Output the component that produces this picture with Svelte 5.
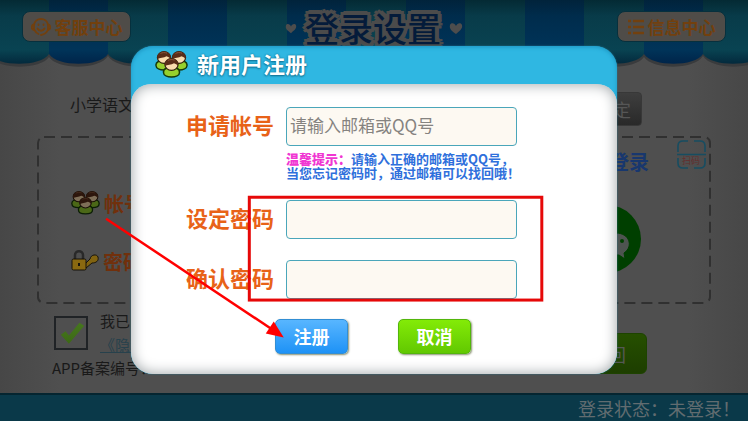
<script>
  let account = $state('');
  let password = $state('');
  let confirm = $state('');
  let agreed = $state(true);
</script>

{#snippet people()}
  <svg class="people" viewBox="0 0 33 27" aria-hidden="true">
    {#each [[9, 6.5], [24, 6.5], [16.5, 13.5]] as [x, y]}
      <g transform="translate({x} {y})">
        <path d="M-8 8C-8.500 4-4 3 0 3s8.500 1 8 5c0 6-16 6-16 0z" fill="#96d02e" stroke="#173b0a" stroke-width="1.5" />
        <ellipse cx="0" cy="0" rx="6.6" ry="5.8" fill="#fbdcae" stroke="#33200f" stroke-width="1.2" />
        <path d="M-6.6 1.5C-8-8.500 8-8.500 6.600 1.500 5.500 0 4-.8 2.500-1.200 0 .5-4.500 0-6.600 1.500z" fill="#5a2c18" />
        <path d="M-3.5-4C-2-5 1-5.3 3-4.3" fill="none" stroke="#8a5338" />
      </g>
    {/each}
  </svg>
{/snippet}

<div class="page">
  <header>
    <svg class="awning" width="100%" height="68" aria-hidden="true">
      <defs>
        <linearGradient id="teal" x1="0" y1="0" x2="0" y2="1">
          <stop offset="0" stop-color="#042a34" />
          <stop offset=".25" stop-color="#083b49" />
          <stop offset=".78" stop-color="#094352" />
          <stop offset="1" stop-color="#03293c" />
        </linearGradient>
        <linearGradient id="blue" x1="0" y1="0" x2="0" y2="1">
          <stop offset="0" stop-color="#01233b" />
          <stop offset=".25" stop-color="#002c4c" />
          <stop offset=".78" stop-color="#003459" />
          <stop offset="1" stop-color="#002449" />
        </linearGradient>
        <pattern id="stripes" width="119" height="68" x="-11" patternUnits="userSpaceOnUse">
          <path d="M0 56C8 70 52 70 60 57 68 70 111 70 119 56V0H0z" fill="#393b3d" />
          <path d="M0 0h60v54C52 67 8 67 0 54z" fill="url(#teal)" />
          <path d="M60 0h59v54C111 67 68 67 60 54z" fill="url(#blue)" />
        </pattern>
      </defs>
      <rect width="100%" height="68" fill="url(#stripes)" />
    </svg>
    <button class="nav">
      <svg width="20" height="20" viewBox="0 0 20 20" fill="none" stroke="#72400e" stroke-width="1.8" stroke-linecap="round" aria-hidden="true">
        <path d="M3 8c1-8 13-8 14 0M17 12.5c-1 3-4 5-7 5.5M3.5 13c1 2 2.5 3.5 4 4" />
        <path d="M3 7.5C0 8 0 12.5 3 13zM17 7.5c3 .5 3 5 0 5.500z" />
        <path d="M6.5 11.5c1.5 3 5.5 3 7 0M7.500 7.500v.5M12.500 7.500v.5" />
      </svg>
      客服中心
    </button>
    <div class="brand">
      <svg width="12" height="11" viewBox="0 0 14 13" aria-hidden="true"><path d="M7 12C3 9 0 7 1 3c1-3 5-2 6 1 1-3 5-4 6-1 1 4-3 6-6 9z" fill="#4d4d4d" /></svg>
      <h1>登录设置</h1>
      <svg width="14" height="13" viewBox="0 0 14 13" aria-hidden="true"><path d="M7 12C3 9 0 7 1 3c1-3 5-2 6 1 1-3 5-4 6-1 1 4-3 6-6 9z" fill="#4d4d4d" /></svg>
    </div>
    <button class="nav">
      <svg width="16" height="16" viewBox="0 0 16 16" stroke="#72400e" stroke-width="2.4" aria-hidden="true">
        <path d="M0 2h3M5 2h11M0 8h3M5 8h11M0 14h3M5 14h11" />
      </svg>
      信息中心
    </button>
  </header>

  <main>
    <div class="subject">
      <span>小学语文</span>
      <button class="ok">确定</button>
    </div>

    <section class="login">
      <svg class="dashes" width="100%" height="100%" aria-hidden="true">
        <rect class="dash" x="0" y="0" width="100%" height="100%" rx="6" />
      </svg>
      <div class="fields">
        <div class="field">{@render people()}<span>帐号</span></div>
        <div class="field">
          <svg width="28" height="22" viewBox="0 0 28 22" stroke="#17130a" aria-hidden="true">
            <path d="M4 10V5c0-5 8-5 8 0v5" fill="none" stroke="#292929" stroke-width="2.5" />
            <path d="M13 15l6-6c1-5 7-5 8-2 1 4-2 6-6 6l-6 5z" fill="#816310" />
            <rect x="1" y="9" width="14" height="11" rx="1.5" fill="#8a6910" />
            <path d="M8 13v3" stroke-width="2" />
          </svg>
          <span>密码</span>
        </div>
      </div>
      <div class="wechat">
        <h2>登录</h2>
        <svg width="68" height="68" viewBox="0 0 68 68" aria-hidden="true">
          <circle cx="34" cy="34" r="34" fill="#003f00" />
          <path d="M27 17c-12 0-18 14-9 21l-2 6 7-4c18 5 25-23 4-23z" fill="#4e5450" />
          <path d="M43 28c-17 0-19 22-2 22l5 0 6 4-1-6c10-7 5-20-8-20z" fill="#4e5450" stroke="#003f00" />
          <circle cx="38" cy="36" r="2" fill="#003f00" />
          <circle cx="49" cy="36" r="2" fill="#003f00" />
        </svg>
      </div>
      <div class="scan">
        <svg width="29" height="29" viewBox="0 0 29 29" fill="none" stroke="#174d61" stroke-width="1.6" aria-hidden="true">
          <path d="M1 12V6q0-5 5-5h5M17 1h6q5 0 5 5v6M1 18v5q0 5 5 5h5M17 28h6q5 0 5-5v-5M0 14.5h29" />
        </svg>
        <span>扫码</span>
      </div>
    </section>

    <div class="bottom">
      <label class="agree">
        <input type="checkbox" bind:checked={agreed} />
        <span>我已阅读<br /><a href="#privacy">《隐私》</a></span>
      </label>
      <button class="back">返回</button>
    </div>
    <p class="record">APP备案编号：</p>
  </main>

  <footer>登录状态：未登录！</footer>

  <div class="overlay">
    <div class="dialog" role="dialog" aria-labelledby="dialog-title">
      <div class="dialog-head">
        {@render people()}
        <h2 id="dialog-title">新用户注册</h2>
      </div>
      <form onsubmit={(e) => e.preventDefault()}>
        <div class="row">
          <label for="account">申请帐号</label>
          <input id="account" type="text" placeholder="请输入邮箱或QQ号" bind:value={account} />
        </div>
        <p class="hint">
          <strong>温馨提示：</strong>请输入正确的邮箱或QQ号，<br />当您忘记密码时，通过邮箱可以找回哦！
        </p>
        <div class="row">
          <label for="password">设定密码</label>
          <input id="password" type="password" bind:value={password} />
        </div>
        <div class="row">
          <label for="confirm">确认密码</label>
          <input id="confirm" type="password" bind:value={confirm} />
        </div>
        <div class="actions">
          <button class="register" type="submit">注册</button>
          <button class="cancel" type="button">取消</button>
        </div>
      </form>
      <svg class="guide" viewBox="0 0 487 328" aria-hidden="true">
        <rect x="118.5" y="151.5" width="293" height="103" fill="none" stroke="#e60808" stroke-width="3" />
        <path d="M-25 173L143 285" stroke="#f00" stroke-width="2.5" />
        <path d="M153 292l-18-4 8-12z" fill="#f00" />
      </svg>
    </div>
  </div>
</div>

<style>
  :global(body) {
    margin: 0;
    background: #4f4f4f;
  }

  .page {
    position: relative;
    display: flex;
    flex-direction: column;
    min-height: 100vh;
    overflow: hidden;
    background: linear-gradient(90deg, #474747, #4f4f4f 8%, #4f4f4f 92%, #474747);
    color: #191919;
    font-family: "Noto Sans CJK SC", sans-serif;
  }

  h1,
  h2,
  p {
    margin: 0;
  }

  button,
  input {
    box-sizing: border-box;
    font-family: inherit;
  }

  button {
    padding: 0;
    cursor: pointer;
  }

  header {
    position: relative;
    display: flex;
    justify-content: space-between;
    align-items: flex-start;
    box-sizing: border-box;
    height: 68px;
    padding: 11px 22px 0;
  }

  .awning {
    position: absolute;
    top: 0;
    left: 0;
  }

  .nav {
    position: relative;
    display: flex;
    align-items: center;
    justify-content: center;
    gap: 4px;
    width: 109px;
    height: 31px;
    border: 1px solid #07303d;
    border-radius: 8px;
    background: #4f4c48;
    color: #72400e;
    font-size: 17px;
    font-weight: 700;
    line-height: 24px;
  }

  .nav svg {
    flex-shrink: 0;
  }

  .brand {
    position: relative;
    display: flex;
    align-items: center;
    gap: 8px;
    height: 34px;
  }

  h1 {
    color: #041b3a;
    font-size: 34px;
    font-weight: 500;
    line-height: 34px;
    text-shadow:
      4px 0 #4b4b4b, -4px 0 #4b4b4b, 0 4px #4b4b4b, 0 -4px #4b4b4b,
      3px 3px #4b4b4b, -3px 3px #4b4b4b, 3px -3px #4b4b4b, -3px -3px #4b4b4b,
      2px 1px #4b4b4b, -2px -1px #4b4b4b, 1px -2px #4b4b4b, -1px 2px #4b4b4b;
  }

  main {
    flex: 1;
    padding: 24px 38px 0;
  }

  .subject {
    display: flex;
    justify-content: space-between;
    align-items: flex-start;
    padding: 0 68px 0 32px;
    font-size: 16px;
    line-height: 24px;
  }

  .ok {
    width: 66px;
    height: 34px;
    padding-right: 10px;
    border: 1px solid #383838;
    border-radius: 4px;
    background: linear-gradient(#3e3e3e, #292929);
    color: #565656;
    font-size: 18px;
    line-height: 24px;
    text-align: right;
  }

  .login {
    position: relative;
    display: flex;
    justify-content: space-between;
    box-sizing: border-box;
    height: 166px;
    margin-top: 11px;
    padding: 12px 61px 0 33px;
  }

  .dashes {
    position: absolute;
    inset: 0;
    overflow: visible;
  }

  .dash {
    fill: none;
    stroke: #303030;
    stroke-width: 2;
    stroke-dasharray: 11 6;
  }

  .fields {
    display: flex;
    flex-direction: column;
    gap: 34px;
    padding-top: 42px;
  }

  .field {
    display: flex;
    align-items: center;
    gap: 4px;
    height: 24px;
    color: #71300c;
    font-size: 20px;
    font-weight: 700;
  }

  .field .people {
    width: 29px;
    filter: brightness(0.5);
  }

  .people {
    width: 33px;
    flex-shrink: 0;
  }

  .wechat {
    display: flex;
    flex-direction: column;
    align-items: center;
    gap: 30px;
  }

  .wechat h2 {
    padding-left: 40px;
    color: #18376e;
    font-size: 20px;
    line-height: 26px;
  }

  .wechat svg {
    margin-right: 4px;
  }

  .scan {
    position: absolute;
    top: 3px;
    right: 4px;
    width: 29px;
    height: 29px;
  }

  .scan span {
    position: absolute;
    top: 15px;
    left: 5px;
    color: #642d2d;
    font-size: 9px;
    line-height: 12px;
    white-space: nowrap;
  }

  .bottom {
    display: flex;
    justify-content: space-between;
    padding: 6px 63px 0 16px;
  }

  .agree {
    display: flex;
    gap: 12px;
    font-size: 15px;
    line-height: 24px;
  }

  .agree input {
    appearance: none;
    width: 34px;
    height: 34px;
    margin: 7px 0 0;
    border: 2px solid #202326;
  }

  .agree input:checked::before {
    content: "";
    display: block;
    height: 30px;
    background: linear-gradient(#487a1f, #3a6614);
    clip-path: polygon(16% 56%, 32% 44%, 43% 58%, 78% 16%, 94% 26%, 43% 86%);
  }

  a {
    color: #27414c;
  }

  .back {
    width: 74px;
    height: 41px;
    margin-top: 24px;
    padding-right: 20px;
    border: 1px solid #1d4300;
    border-radius: 6px;
    background: linear-gradient(#264f00, #1d3e00);
    color: #545854;
    font-size: 18px;
    text-align: right;
  }

  .record {
    margin-top: -18px;
    padding-left: 14px;
    font-size: 15px;
    line-height: 24px;
  }

  footer {
    box-sizing: border-box;
    height: 28px;
    padding: 0 8px;
    border-top: 2px solid #052530;
    background: #0a3949;
    color: #616c70;
    font-size: 18px;
    line-height: 26px;
    text-align: right;
  }

  .overlay {
    position: absolute;
    inset: 0;
    display: grid;
    place-items: center;
    padding-bottom: 2px;
  }

  .dialog {
    position: relative;
    width: 65%;
    border-radius: 22px;
    background: #2fb7e2;
    box-shadow: 0 0 2px #267791, inset 0 1px 4px #1c94c1;
  }

  .dialog-head {
    display: flex;
    align-items: center;
    gap: 9px;
    height: 38px;
    padding-left: 24px;
  }

  .dialog-head h2 {
    color: #fff;
    font-size: 22px;
    line-height: 34px;
    padding-bottom: 4px;
    text-shadow: 0 0 2px #107092, 0 1px 2px #107092;
  }

  form {
    padding: 23px 20px 20px;
    border-radius: 20px 20px 22px 22px;
    background: #fff;
    box-shadow: inset 0 0 14px #9aa0a3;
  }

  .row {
    display: grid;
    grid-template-columns: 124px 231px;
    justify-content: start;
    align-items: start;
    padding-left: 11px;
  }

  .row + .row {
    margin-top: 21px;
  }

  .row label {
    padding-right: 12px;
    color: #e86218;
    font-size: 22px;
    font-weight: 700;
    line-height: 34px;
    text-align: right;
  }

  .row input {
    width: 100%;
    height: 39px;
    padding: 0 3px 4px;
    border: 1px solid #4aa6ba;
    border-radius: 4px;
    background: #fdf9f2;
    color: #333;
    font-size: 17px;
  }

  .row input::placeholder {
    color: #858380;
  }

  .hint {
    margin: 6px 0 20px;
    padding-left: 135px;
    color: #2f70dc;
    font-size: 13px;
    font-weight: 700;
    line-height: 14px;
    white-space: nowrap;
  }

  .hint strong {
    color: #f037d2;
  }

  .actions {
    display: flex;
    gap: 50px;
    margin-top: 20px;
    padding-left: 124px;
  }

  .actions button {
    width: 73px;
    height: 35px;
    border-radius: 5px;
    box-shadow: 1px 1px 2px #8a9272;
    color: #fff;
    font-size: 18px;
    font-weight: 700;
    line-height: 30px;
  }

  .actions .register {
    border: 1px solid #328ed4;
    background: linear-gradient(#58b6ff, #1e92f6);
  }

  .actions .cancel {
    border: 1px solid #53b60b;
    background: linear-gradient(#83eb07, #62c801);
  }

  .guide {
    position: absolute;
    top: 0;
    left: 0;
    width: 100%;
    overflow: visible;
    pointer-events: none;
  }
</style>
